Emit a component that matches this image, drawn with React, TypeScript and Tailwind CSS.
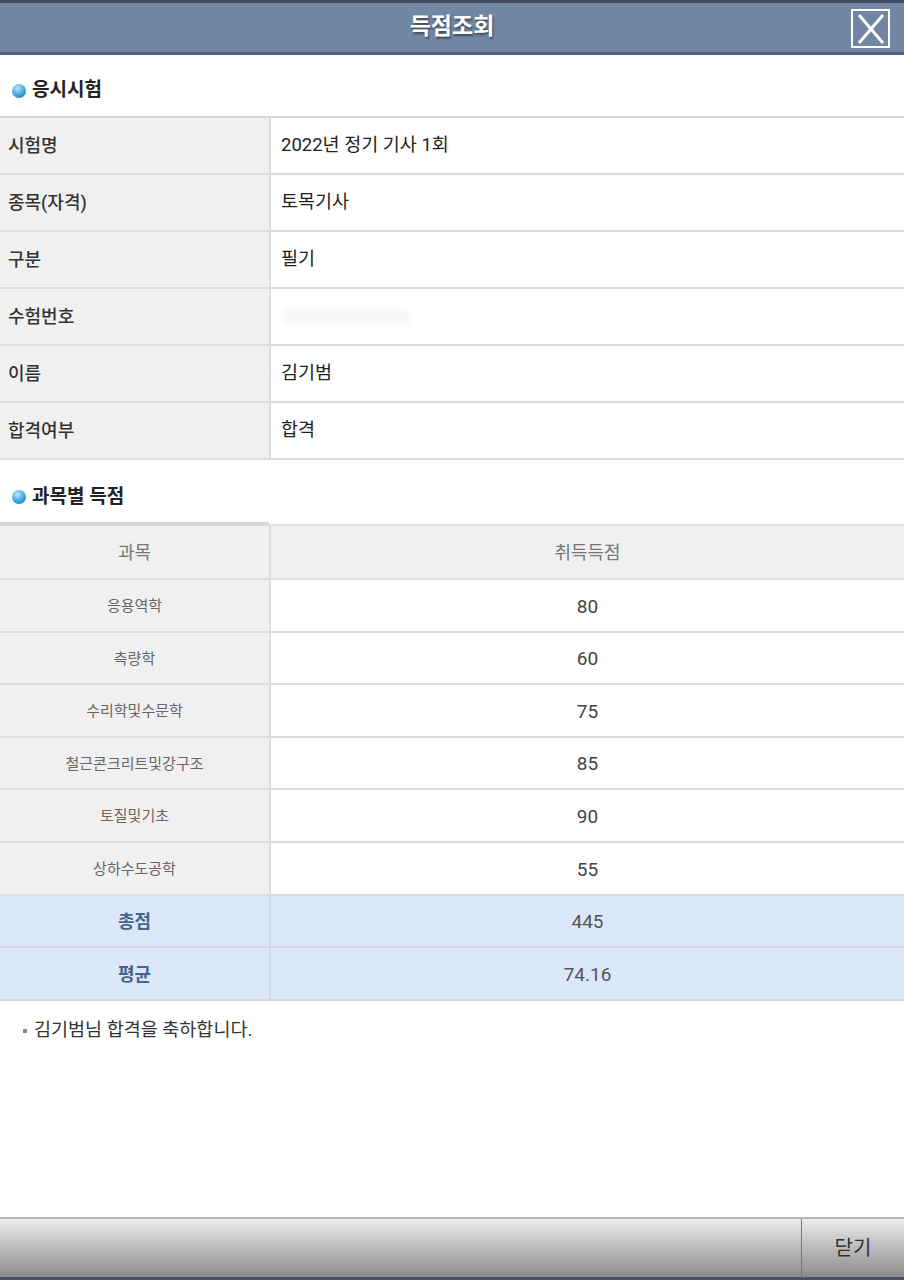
import React from "react";

const font = { fontFamily: '"Roboto", "Noto Sans CJK KR", sans-serif' };

const info = [
  ["시험명", "2022년 정기 기사 1회"],
  ["종목(자격)", "토목기사"],
  ["구분", "필기"],
  ["수험번호", ""],
  ["이름", "김기범"],
  ["합격여부", "합격"],
];

const scores = [
  ["응용역학", "80"],
  ["측량학", "60"],
  ["수리학및수문학", "75"],
  ["철근콘크리트및강구조", "85"],
  ["토질및기초", "90"],
  ["상하수도공학", "55"],
];

function Bullet() {
  return (
    <span className="inline-block h-[14px] w-[14px] rounded-full bg-[radial-gradient(circle_at_40%_30%,#bfe6fb_0%,#3aa3e0_55%,#1a6fb3_100%)]" />
  );
}

function SectionTitle({ children }: { children: React.ReactNode }) {
  return (
    <div className="flex items-center gap-[6px] pl-[12px] text-[19px] font-bold text-[#222]">
      <Bullet />
      <span>{children}</span>
    </div>
  );
}

export default function App() {
  return (
    <div className="flex h-[1280px] w-[904px] flex-col bg-white" style={font}>
      <header className="relative flex h-[55px] shrink-0 items-center justify-center border-t-[3px] border-b-[3px] border-t-[#3f4c60] border-b-[#4d5e77] bg-[#7086a2]">
        <h1 className="text-[23px] font-bold text-white [text-shadow:1px_2px_2px_rgba(0,0,0,0.45)]">득점조회</h1>
        <button className="absolute right-[14px] top-[6px] flex h-[39px] w-[39px] items-center justify-center border-2 border-white">
          <svg width="30" height="32" viewBox="0 0 30 32" fill="none" stroke="white" strokeWidth="3">
            <path d="M3 2 L27 30 M27 2 L3 30" />
          </svg>
        </button>
      </header>

      <div className="flex h-[61px] items-center pt-[10px]">
        <SectionTitle>응시시험</SectionTitle>
      </div>

      <div className="border-t-2 border-[#d6d6d6]">
        {info.map(([k, v]) => (
          <div key={k} className="flex h-[57px] border-b-2 border-[#dcdcdc] text-[18px]">
            <div className="flex w-[271px] shrink-0 items-center border-r-2 border-[#dcdcdc] bg-[#f0f0f0] pl-[8px] font-medium text-[#333]">
              {k}
            </div>
            <div className="flex flex-1 items-center pl-[10px] text-[18.5px] text-[#222]">
              {v === "" ? (
                <span className="inline-block h-[18px] w-[130px] rounded-full bg-[#f7f7f7] blur-[3px]" />
              ) : (
                v
              )}
            </div>
          </div>
        ))}
      </div>

      <div className="flex h-[64px] items-center pt-[10px]">
        <SectionTitle>과목별 득점</SectionTitle>
      </div>

      <div className="relative">
        <div className="absolute left-0 top-[-2px] h-[3px] w-[269px] bg-[#d6d6d6]" />
        <div className="flex h-[56px] border-b-2 border-t-2 border-[#dcdcdc] bg-[#f0f0f0] text-[18px] text-[#777]">
          <div className="flex w-[271px] shrink-0 items-center justify-center border-r-2 border-[#dcdcdc]">과목</div>
          <div className="flex flex-1 items-center justify-center">취득득점</div>
        </div>
        {scores.map(([k, v]) => (
          <div key={k} className="flex h-[52.6px] border-b-2 border-[#dcdcdc]">
            <div className="flex w-[271px] shrink-0 items-center justify-center border-r-2 border-[#dcdcdc] bg-[#f0f0f0] pt-[2px] text-[15px] text-[#666]">
              {k}
            </div>
            <div className="flex flex-1 items-center justify-center pt-[3px] text-[19px] text-[#444]">{v}</div>
          </div>
        ))}
        {[
          ["총점", "445"],
          ["평균", "74.16"],
        ].map(([k, v]) => (
          <div key={k} className="flex h-[52.6px] border-b-2 border-[#d3d9e3] bg-[#dce7fa]">
            <div className="flex w-[271px] shrink-0 items-center justify-center border-r-2 border-[#d3d9e3] pt-[2px] text-[18px] font-bold text-[#466689]">
              {k}
            </div>
            <div className="flex flex-1 items-center justify-center pt-[3px] text-[19px] text-[#555]">{v}</div>
          </div>
        ))}
      </div>

      <div className="flex items-center gap-[7px] pl-[23px] pt-[16px] text-[18.5px] text-[#333]">
        <span className="inline-block h-[4px] w-[4px] bg-[#888]" />
        <span>김기범님 합격을 축하합니다.</span>
      </div>

      <div className="flex-1" />

      <footer className="flex h-[63px] shrink-0 border-t-2 border-b-[3px] border-t-[#b5b5b5] border-b-[#4c5366] bg-gradient-to-b from-[#ececec] to-[#8c8c8c]">
        <div className="flex-1" />
        <button className="flex w-[103px] items-center justify-center border-l border-[#777] text-[20px] text-[#333]">닫기</button>
      </footer>
    </div>
  );
}
